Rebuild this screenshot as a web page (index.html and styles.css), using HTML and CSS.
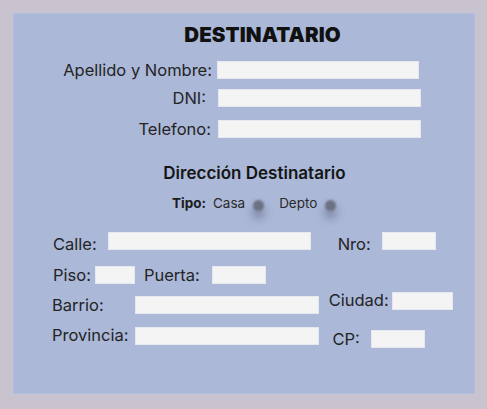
FILE: index.html
```html
<!DOCTYPE html>
<html lang="es">
<head>
<meta charset="utf-8">
<title>Destinatario</title>
<link rel="stylesheet" href="styles.css">
</head>
<body>
<div class="panel">
  <h1 class="title">DESTINATARIO</h1>
  <div class="person">
    <div class="prow r1"><span class="plabel">Apellido y Nombre:</span><span class="input w-name"></span></div>
    <div class="prow r2"><span class="plabel dni">DNI:</span><span class="input w-long"></span></div>
    <div class="prow r3"><span class="plabel tel">Telefono:</span><span class="input w-long"></span></div>
  </div>
  <h2 class="subtitle">Dirección Destinatario</h2>
  <div class="tipo">
    <span class="tipo-label">Tipo:</span>
    <span class="opt">Casa</span><span class="radio"></span>
    <span class="opt depto">Depto</span><span class="radio"></span>
  </div>
  <div class="addr">
    <div class="arow a1">
      <span class="label low">Calle:</span><span class="input w-calle"></span>
      <span class="label low nro">Nro:</span><span class="input w-nro"></span>
    </div>
    <div class="arow a2">
      <span class="label">Piso:</span><span class="input w-piso"></span>
      <span class="label puerta">Puerta:</span><span class="input w-puerta"></span>
    </div>
    <div class="arow a3">
      <div class="group barrio"><span class="label">Barrio:</span><span class="input w-barrio"></span></div>
      <div class="group ciudad"><span class="label up">Ciudad:</span><span class="input w-ciudad"></span></div>
    </div>
    <div class="arow a4">
      <div class="group prov"><span class="label up">Provincia:</span><span class="input w-prov"></span></div>
      <div class="group cp"><span class="label">CP:</span><span class="input w-cp"></span></div>
    </div>
  </div>
</div>
</body>
</html>
```

FILE: styles.css
```css
html, body {
  margin: 0;
  padding: 0;
}
body {
  background: #c9c2cf;
  width: 487px;
  height: 409px;
  overflow: hidden;
  font-family: Inter, "Noto Sans", "Liberation Sans", sans-serif;
  color: #242424;
  padding: 13px 0 0 13px;
  box-sizing: border-box;
}
.panel {
  width: 462px;
  height: 381px;
  box-sizing: border-box;
  background: #abb8d8;
  border: 1px solid #b3bedc;
  padding-top: 9px;
}
.title {
  margin: 0;
  font-size: 20.5px;
  line-height: 24px;
  font-weight: 900;
  text-align: center;
  padding-left: 37px;
  color: #111;
  letter-spacing: 0.1px;
}
.person {
  margin-top: 14px;
}
.prow {
  display: flex;
  align-items: center;
  height: 18px;
}
.r2 { margin-top: 10px; }
.r3 { margin-top: 13px; }
.plabel {
  width: 198px;
  text-align: right;
  font-size: 16.5px;
  line-height: 18px;
  margin-right: 5px;
  white-space: nowrap;
}
.plabel.dni { width: 192px; margin-right: 12px; }
.plabel.tel { width: 197px; margin-right: 7px; }
.input {
  display: block;
  height: 18px;
  box-sizing: border-box;
  background: #f4f4f5;
  border: 1px solid #e6e8ef;
  flex: none;
}
.w-name { width: 202px; }
.w-long { width: 203px; }
.subtitle {
  margin: 25px 0 0 0;
  font-size: 17px;
  line-height: 20px;
  font-weight: 600;
  text-align: center;
  padding-left: 21px;
  color: #151515;
}
.tipo {
  display: flex;
  align-items: center;
  margin-top: 10px;
  height: 20px;
  padding-left: 158px;
  font-size: 13.5px;
}
.tipo-label {
  font-weight: 700;
  color: #1c1c1c;
}
.opt {
  margin-left: 7px;
  color: #2a2a2a;
}
.opt.depto { margin-left: 15px; }
.radio {
  display: block;
  width: 11px;
  height: 11px;
  border-radius: 50%;
  background: #6c7183;
  margin-left: 8px;
  margin-top: 4px;
  filter: blur(0.8px);
  box-shadow: 0 7px 9px 1px rgba(70, 75, 100, 0.45);
}
.addr {
  margin-top: 19px;
}
.arow {
  display: flex;
  align-items: center;
  height: 18px;
  padding-left: 39px;
}
.label {
  font-size: 16.5px;
  line-height: 18px;
  white-space: nowrap;
}
.label.low { margin-top: 5px; }
.label.up { margin-top: -3px; }
.a1 .input.w-calle { margin-left: 11px; width: 203px; }
.label.nro { margin-left: 27px; }
.w-nro { margin-left: 11px; width: 54px; }
.a2 { margin-top: 16px; }
.w-piso { margin-left: 4px; width: 40px; }
.label.puerta { margin-left: 9px; }
.w-puerta { margin-left: 12px; width: 54px; }
.a3 {
  margin-top: 8px;
  height: 22px;
  align-items: flex-start;
  padding-left: 38px;
}
.a4 {
  margin-top: 13px;
  height: 21px;
  align-items: flex-start;
  padding-left: 38px;
}
.group {
  display: flex;
  align-items: center;
}
.barrio { margin-top: 4px; }
.w-barrio { margin-left: 31px; width: 184px; }
.ciudad { margin-left: 10px; }
.w-ciudad { margin-left: 3px; width: 61px; }
.w-prov { margin-left: 6px; width: 184px; }
.cp { margin-top: 3px; margin-left: 14px; }
.w-cp { margin-left: 11px; width: 54px; }
```
